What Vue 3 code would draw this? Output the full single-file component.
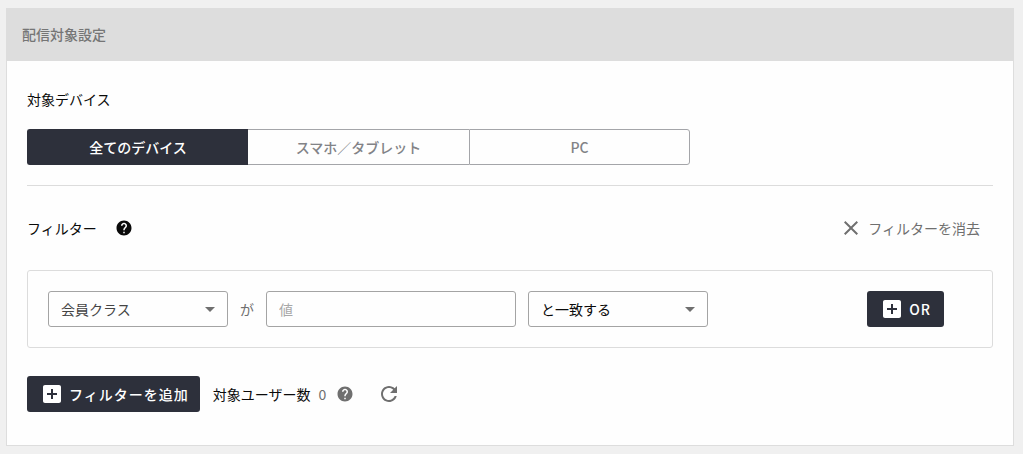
<script setup>
import { ref } from 'vue'

const devices = ['全てのデバイス', 'スマホ／タブレット', 'PC']
const device = ref(devices[0])
const field = ref('会員クラス')
const value = ref('')
const condition = ref('と一致する')
const userCount = ref(0)

const helpPath =
  'M12 2C6.48 2 2 6.48 2 12s4.48 10 10 10 10-4.48 10-10S17.52 2 12 2zm1 17h-2v-2h2v2zm2.07-7.75l-.9.92C13.45 12.9 13 13.5 13 15h-2v-.5c0-1.1.45-2.1 1.17-2.83l1.24-1.26c.37-.36.59-.86.59-1.41 0-1.1-.9-2-2-2s-2 .9-2 2H8c0-2.21 1.79-4 4-4s4 1.79 4 4c0 .88-.36 1.68-.93 2.25z'
const addPath =
  'M19 3H5c-1.11 0-2 .9-2 2v14c0 1.1.89 2 2 2h14c1.1 0 2-.9 2-2V5c0-1.1-.9-2-2-2zm-2 10h-4v4h-2v-4H7v-2h4V7h2v4h4v2z'
const closePath =
  'M19 6.41L17.59 5 12 10.59 6.41 5 5 6.41 10.59 12 5 17.59 6.41 19 12 13.41 17.59 19 19 17.59 13.41 12z'
const refreshPath =
  'M17.65 6.35C16.2 4.9 14.21 4 12 4c-4.42 0-7.99 3.58-7.99 8s3.57 8 7.99 8c3.73 0 6.84-2.55 7.73-6h-2.08c-.82 2.33-3.04 4-5.65 4-3.31 0-6-2.69-6-6s2.69-6 6-6c1.66 0 3.14.69 4.22 1.78L13 11h7V4l-2.35 2.35z'
</script>

<template>
  <section class="card">
    <h2 class="card-header">配信対象設定</h2>
    <div class="card-body">
      <div id="device-label" class="label">対象デバイス</div>
      <div class="segments" role="group" aria-labelledby="device-label">
        <button
          v-for="name in devices"
          :key="name"
          type="button"
          class="segment"
          :class="{ active: device === name }"
          :aria-pressed="device === name"
          @click="device = name"
        >{{ name }}</button>
      </div>

      <hr class="divider" />

      <div class="filter-head">
        <span class="label">フィルター</span>
        <button type="button" class="icon-button dark" aria-label="ヘルプ">
          <svg class="icon-small" viewBox="0 0 24 24"><path :d="helpPath" /></svg>
        </button>
        <button type="button" class="clear">
          <svg class="icon" viewBox="0 0 24 24"><path :d="closePath" /></svg>
          フィルターを消去
        </button>
      </div>

      <div class="filter-box">
        <div class="select">
          <select v-model="field" class="control muted" aria-label="項目">
            <option>会員クラス</option>
          </select>
          <svg class="arrow" viewBox="0 0 24 24"><path d="M7 10l5 5 5-5z" /></svg>
        </div>
        <span class="particle">が</span>
        <input v-model="value" type="text" class="control value" placeholder="値" aria-label="値" />
        <div class="select">
          <select v-model="condition" class="control" aria-label="条件">
            <option>と一致する</option>
          </select>
          <svg class="arrow" viewBox="0 0 24 24"><path d="M7 10l5 5 5-5z" /></svg>
        </div>
        <button type="button" class="primary or">
          <svg class="icon" viewBox="0 0 24 24"><path :d="addPath" /></svg>
          OR
        </button>
      </div>

      <div class="footer">
        <button type="button" class="primary">
          <svg class="icon" viewBox="0 0 24 24"><path :d="addPath" /></svg>
          フィルターを追加
        </button>
        <span class="count-label">対象ユーザー数</span>
        <span class="count">{{ userCount }}</span>
        <button type="button" class="icon-button help" aria-label="ヘルプ">
          <svg class="icon-small" viewBox="0 0 24 24"><path :d="helpPath" /></svg>
        </button>
        <button type="button" class="icon-button refresh" aria-label="更新">
          <svg class="icon" viewBox="0 0 24 24"><path :d="refreshPath" /></svg>
        </button>
      </div>
    </div>
  </section>
</template>

<style>
body {
  background: #f0f0f0;
}
</style>

<style scoped>
.card,
.card * {
  box-sizing: border-box;
}
.card {
  margin: 8px 9px 8px 6px;
  border: 1px solid #dddddd;
  background: #fefefe;
  color: #0a0a0a;
  font-family: 'Noto Sans CJK JP', sans-serif;
  font-size: 14px;
  line-height: 22px;
}
.card-header {
  margin: 0;
  padding: 14px 15px 16px;
  background: #dddddd;
  color: #757575;
  font-size: 14px;
  font-weight: 500;
  line-height: 22px;
}
.card-body {
  padding: 27px 20px 33px;
}
button,
input,
select {
  margin: 0;
  font: inherit;
}
button {
  padding: 0;
  border: 0;
  background: none;
  cursor: pointer;
}
svg {
  display: block;
  flex: none;
  fill: currentColor;
}
.icon {
  width: 24px;
  height: 24px;
}
.icon-small {
  width: 18px;
  height: 18px;
}
.segments {
  display: grid;
  grid-template-columns: repeat(3, 1fr);
  max-width: 663px;
  height: 36px;
  margin-top: 19px;
}
.segment {
  border: 1px solid #a4a5a9;
  border-right-width: 0;
  color: #828387;
  font-weight: 500;
}
.segment:first-child {
  border-radius: 3px 0 0 3px;
}
.segment:last-child {
  border-right-width: 1px;
  border-radius: 0 3px 3px 0;
}
.segment.active,
.segment.active + .segment {
  border-left-color: #2d303b;
}
.segment.active {
  border-color: #2d303b;
  background: #2d303b;
  color: #fff;
}
.segment.active + .segment {
  border-left-width: 0;
}
.divider {
  height: 1px;
  margin: 20px 0 24px;
  border: 0;
  background: #dcdcdc;
}
.filter-head {
  display: flex;
  align-items: center;
  height: 36px;
  margin-bottom: 24px;
}
.icon-button {
  color: #6f6f6f;
}
.icon-button.dark {
  margin-left: 18px;
  color: #0a0a0a;
}
.clear {
  display: flex;
  align-items: center;
  gap: 5px;
  height: 36px;
  margin-left: auto;
  padding: 0 13px;
  color: #6f6f6f;
}
.filter-box {
  display: flex;
  align-items: center;
  gap: 12px;
  padding: 20px;
  border: 1px solid #dcdcdc;
  border-radius: 3px;
}
.select {
  position: relative;
  flex: 0 1 180px;
}
.control {
  display: block;
  width: 100%;
  height: 36px;
  padding: 0 12px;
  border: 1px solid #a4a4a4;
  border-radius: 3px;
  background: transparent;
  color: #0a0a0a;
  appearance: none;
}
.control.muted {
  color: #444;
}
.control.value {
  flex: 0 1 250px;
  min-width: 0;
}
.control::placeholder {
  color: #a8a8a8;
  opacity: 1;
}
.arrow {
  position: absolute;
  top: 6px;
  right: 6px;
  width: 24px;
  height: 24px;
  color: #6f6f6f;
  pointer-events: none;
}
.particle {
  color: #6f6f6f;
}
.primary {
  display: flex;
  align-items: center;
  gap: 5px;
  height: 36px;
  padding: 0 11px 0 13px;
  border-radius: 3px;
  background: #2d303b;
  color: #fff;
  font-weight: 500;
  letter-spacing: 1px;
  white-space: nowrap;
}
.primary.or {
  margin: 0 28px 0 auto;
  padding-right: 13px;
}
.footer {
  display: flex;
  align-items: center;
  margin-top: 28px;
}
.count-label {
  margin: 0 8px 0 13px;
}
.count {
  color: #6f6f6f;
}
.icon-button.help {
  margin-left: 10px;
}
.icon-button.refresh {
  margin-left: 23px;
}
</style>
